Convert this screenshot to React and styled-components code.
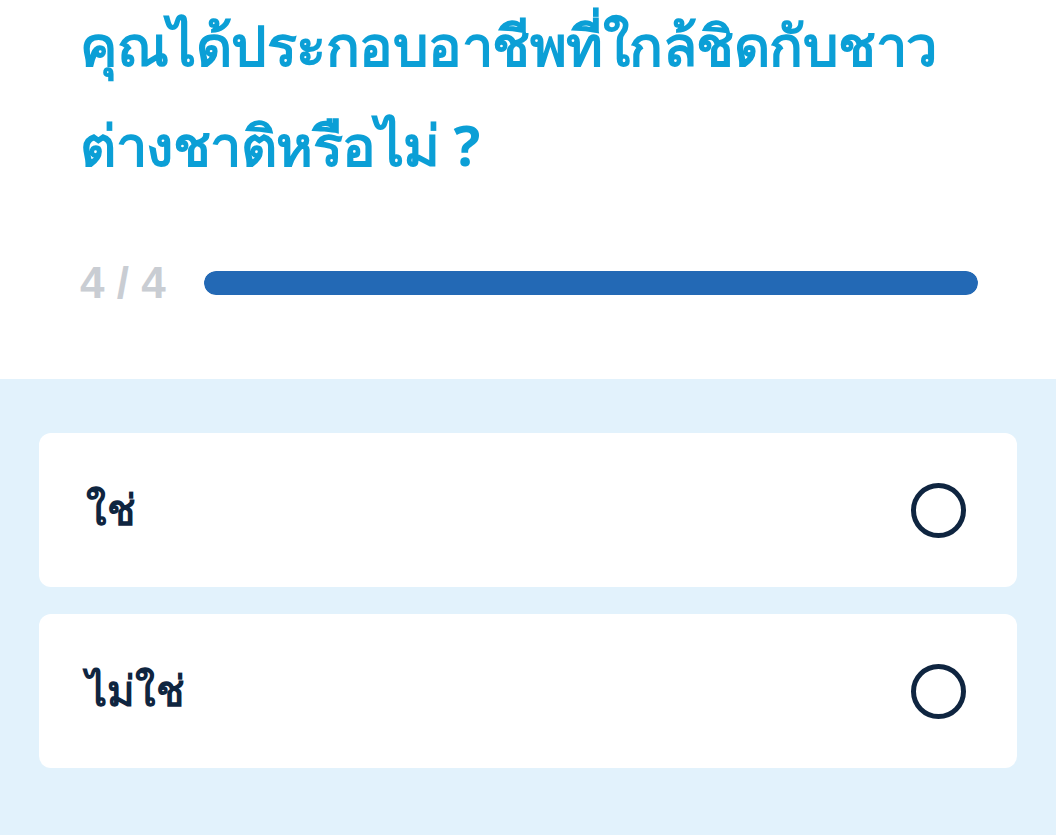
import styled, { createGlobalStyle } from "styled-components";

const GlobalStyle = createGlobalStyle`
  html, body {
    margin: 0;
    padding: 0;
    background: #ffffff;
  }
  body {
    font-family: "Noto Sans", "Liberation Sans", sans-serif;
  }
`;

const Page = styled.div`
  width: 1056px;
  min-height: 835px;
  display: flex;
  flex-direction: column;
`;

const Header = styled.header`
  padding: 0 78px 0 80px;
  height: 379px;
  box-sizing: border-box;
`;

const Title = styled.h1`
  margin: -6px 0 0;
  font-size: 56px;
  line-height: 100px;
  font-weight: 700;
  color: #0b9fd6;
  letter-spacing: -0.5px;
`;

const ProgressRow = styled.div`
  display: flex;
  align-items: center;
  gap: 38px;
  margin-top: 63px;
`;

const Counter = styled.span`
  font-family: "Liberation Sans", sans-serif;
  font-size: 44px;
  line-height: 51px;
  font-weight: 700;
  color: #c9cdd3;
  white-space: nowrap;
`;

const Track = styled.div`
  flex: 1;
  height: 24px;
  border-radius: 12px;
  background: #e6eaef;
  overflow: hidden;
`;

const Fill = styled.div`
  height: 100%;
  border-radius: 12px;
  background: #2369b5;
`;

const Options = styled.section`
  flex: 1;
  background: #e2f2fc;
  padding: 54px 39px 60px;
  display: flex;
  flex-direction: column;
  gap: 27px;
`;

const Option = styled.label`
  height: 154px;
  box-sizing: border-box;
  background: #ffffff;
  border-radius: 12px;
  padding: 0 51px 0 47px;
  display: flex;
  align-items: center;
  justify-content: space-between;
  cursor: pointer;
`;

const OptionText = styled.span`
  font-size: 42px;
  font-weight: 700;
  color: #0f2540;
`;

const Radio = styled.span`
  width: 55px;
  height: 55px;
  box-sizing: border-box;
  border-radius: 50%;
  border: 5px solid #0f2540;
  flex-shrink: 0;
`;

const options = ["ใช่", "ไม่ใช่"];
const step = 4;
const total = 4;

export default function App() {
  return (
    <Page>
      <GlobalStyle />
      <Header>
        <Title>คุณได้ประกอบอาชีพที่ใกล้ชิดกับชาวต่างชาติหรือไม่ ?</Title>
        <ProgressRow>
          <Counter>
            {step} / {total}
          </Counter>
          <Track>
            <Fill style={{ width: `${(step / total) * 100}%` }} />
          </Track>
        </ProgressRow>
      </Header>
      <Options>
        {options.map((o) => (
          <Option key={o}>
            <OptionText>{o}</OptionText>
            <Radio />
          </Option>
        ))}
      </Options>
    </Page>
  );
}
